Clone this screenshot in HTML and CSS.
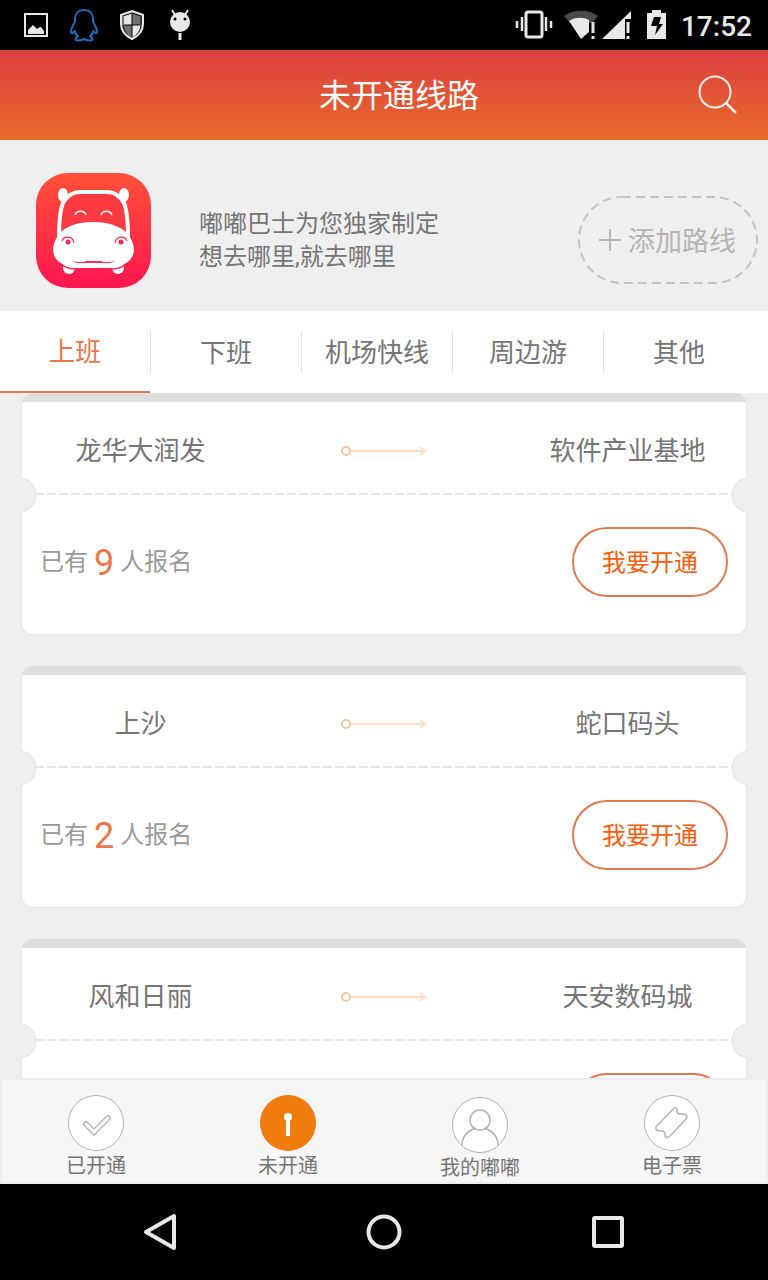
FILE: index.html
```
<!DOCTYPE html>
<html lang="zh-CN">
<head>
  <meta charset="UTF-8" />
  <meta name="viewport" content="width=device-width, initial-scale=1.0"/>
  <title>未开通线路</title>
  <link rel="stylesheet" href="styles.css">
</head>
<body>
  <div class="statusbar">
    <div class="notices">
      <svg width="28" height="36" viewBox="0 0 28 36"><rect x="3" y="7" width="22" height="22" fill="none" stroke="#e8e8e8" stroke-width="2"/><path d="M6 27v-4l5-5 4 4 3-2h1l3 4v3z" fill="#e8e8e8"/></svg>
      <svg width="28" height="36" viewBox="0 0 28 36" fill="none" stroke="#1b6cb8" stroke-width="2" stroke-linejoin="round"><path d="M14 3C8 3 5 7 5 12v3c-2 3-4 7-4 10 0 2 2 1 4-1 0 2 1 4 3 5-2 1-3 3-2 4 3 1 6 0 8-1 2 1 5 2 8 1 1-1 0-3-2-4 2-1 3-3 3-5 2 2 4 3 4 1 0-3-2-7-4-10v-3c0-5-3-9-9-9z"/></svg>
      <svg width="28" height="36" viewBox="0 0 28 36"><path d="M14 5v13h10V9zM14 18v13c-5-3-9-7-10-13z" fill="#707070"/><path d="M14 5L4 9v9h10zM14 18v13c5-3 9-7 10-13z" fill="#e8e8e8"/><path d="M14 7v23M6 18h16" stroke="#000" stroke-width="1"/><path d="M14 6l9 3v8c0 7-4 11-9 14-5-3-9-7-9-14V9z" fill="none" stroke="#000" stroke-width="1"/><path d="M14 4l11 4v9c0 8-5 12-11 15C8 29 3 25 3 17V8z" fill="none" stroke="#e8e8e8" stroke-width="2"/></svg>
      <svg width="28" height="36" viewBox="0 0 28 36"><circle cx="14" cy="15" r="10" fill="#e8e8e8"/><path d="M9 8L6 3M19 8l3-5" stroke="#e8e8e8" stroke-width="2"/><circle cx="9" cy="12" r="1.5"/><circle cx="19" cy="12" r="1.5"/><path d="M14 26v7" stroke="#e8e8e8" stroke-width="3"/></svg>
    </div>
    <div class="system">
      <svg width="36" height="36" viewBox="0 0 36 36" fill="none" stroke="#e8e8e8"><rect x="12" y="5" width="16" height="25" rx="2" stroke-width="3"/><path d="M8 10v14M32 10v14M3 14v7M37 14v7" stroke-width="2.5"/></svg>
      <div class="signals">
        <svg width="34" height="36" viewBox="0 0 34 36"><path d="M0 9C9 2 25 2 34 9l-5 6v1H6z" fill="#4a4a4a"/><path d="M5 14c6-4 14-4 20-1v12l-8 7z" fill="#e8e8e8"/><path d="M29 15v11M29 29v3" stroke="#e8e8e8" stroke-width="3"/></svg>
        <svg width="31" height="36" viewBox="0 0 31 36"><path d="M0 32L29 4v8h-6v20z" fill="#e8e8e8"/><path d="M26 15v11M26 29v3" stroke="#e8e8e8" stroke-width="3"/></svg>
      </div>
      <svg width="20" height="36" viewBox="0 0 20 36"><path d="M5 3h9v3h5v26H0V6h5z" fill="#e8e8e8"/><path d="M7 10h7l-2 7h4L8 28l2-9H4z" fill="#000"/></svg>
      <span class="clock">17:52</span>
    </div>
  </div>

  <header class="header">
    <h1>未开通线路</h1>
    <button class="search" aria-label="搜索">
      <svg width="40" height="40" viewBox="0 0 40 40" fill="none" stroke="#fff" stroke-opacity=".9"><circle cx="17" cy="17" r="15.5" stroke-width="2"/><path d="M28 28l10 10" stroke-width="2.5"/></svg>
    </button>
  </header>

  <section class="intro">
    <svg class="logo" width="115" height="115" viewBox="0 0 115 115">
      <defs><linearGradient id="red" x1="0" y1="0" x2="0" y2="1"><stop offset="0" stop-color="#ff5138"/><stop offset="1" stop-color="#ff1650"/></linearGradient></defs>
      <rect width="115" height="115" rx="32" fill="url(#red)"/>
      <g fill="#fff">
        <ellipse cx="27" cy="22" rx="5" ry="7"/><ellipse cx="88" cy="22" rx="5" ry="7"/>
        <rect x="27" y="86" width="12" height="15" rx="6"/><rect x="76" y="86" width="12" height="15" rx="6"/>
      </g>
      <path d="M23 66c0-16 1-29 4-36 4-7 9-11 17-11h27c8 0 13 4 17 11 3 7 4 20 4 36" fill="#fb3a42" stroke="#fff" stroke-width="4"/>
      <path d="M57 49c18 0 32 6 37 15 7 12 5 24-10 29-3 2-5 2-8 2H39c-3 0-5 0-8-2-15-5-17-17-10-29 5-9 18-15 36-15z" fill="#fff"/>
      <path d="M25 91c5 4 9 5 14 5h37c5 0 9-1 14-5" fill="none" stroke="#ff1d4d" stroke-width="1.5"/>
      <g fill="none" stroke="#fff" stroke-width="1.5"><path d="M39 42c2-5 9-5 11 0M65 42c2-5 9-5 11 0"/></g>
      <path d="M36 88c5 1 10 2 14 0h15c4 2 9 1 14 0-5 3-9 2-14 2H50c-5 0-9 1-14-2z" fill="#ff2850"/>
      <g fill="none" stroke="#ff2850" stroke-width="1.2"><path d="M26 68c2-6 11-5 12 2M79 70c1-7 10-8 12-2"/></g>
      <circle cx="32" cy="69" r="2.5" fill="#ff2850"/><circle cx="85" cy="69" r="2.5" fill="#ff2850"/>
    </svg>
    <p class="slogan">嘟嘟巴士为您独家制定<br/>想去哪里,就去哪里</p>
    <button class="add-route">
      <svg class="dashes" width="180" height="88"><rect x="1" y="1" width="178" height="86" rx="43" fill="none" stroke="#c4c4c4" stroke-width="2" stroke-dasharray="9 5"/></svg>
      <svg width="24" height="24" viewBox="0 0 24 24" stroke="#b4b4b4" stroke-width="2"><path d="M12 1v22M1 12h22"/></svg>
      <span>添加路线</span>
    </button>
  </section>

  <nav class="tabs">
    <a href="#" class="active">上班</a>
    <a href="#">下班</a>
    <a href="#">机场快线</a>
    <a href="#">周边游</a>
    <a href="#">其他</a>
  </nav>

  <main class="list">
    <article class="ticket">
      <div class="route">
        <span>龙华大润发</span>
        <svg width="86" height="12" viewBox="0 0 86 12" fill="none" stroke="#fbdfc8" stroke-width="2"><path d="M9 6h74M79 2l5 4-5 4"/><circle cx="5" cy="6" r="4" stroke="#f4c8a4"/></svg>
        <span>软件产业基地</span>
      </div>
      <div class="tear"></div>
      <div class="signup">
        <p>已有 <b>9</b> 人报名</p>
        <button class="open">我要开通</button>
      </div>
    </article>
    <article class="ticket">
      <div class="route">
        <span>上沙</span>
        <svg width="86" height="12" viewBox="0 0 86 12" fill="none" stroke="#fbdfc8" stroke-width="2"><path d="M9 6h74M79 2l5 4-5 4"/><circle cx="5" cy="6" r="4" stroke="#f4c8a4"/></svg>
        <span>蛇口码头</span>
      </div>
      <div class="tear"></div>
      <div class="signup">
        <p>已有 <b>2</b> 人报名</p>
        <button class="open">我要开通</button>
      </div>
    </article>
    <article class="ticket">
      <div class="route">
        <span>风和日丽</span>
        <svg width="86" height="12" viewBox="0 0 86 12" fill="none" stroke="#fbdfc8" stroke-width="2"><path d="M9 6h74M79 2l5 4-5 4"/><circle cx="5" cy="6" r="4" stroke="#f4c8a4"/></svg>
        <span>天安数码城</span>
      </div>
      <div class="tear"></div>
      <div class="signup">
        <p>已有 <b>1</b> 人报名</p>
        <button class="open">我要开通</button>
      </div>
    </article>
  </main>

  <nav class="bottom">
    <a href="#">
      <svg width="56" height="56" viewBox="0 0 56 56" stroke="#b4b4b4" fill="#fff"><circle cx="28" cy="28" r="27.5"/><path d="M18 29l8 8 14-14" fill="none" stroke="#b8b8b8" stroke-width="6" stroke-linecap="round"/><path d="M18 29l8 8 14-14" fill="none" stroke="#fff" stroke-width="3" stroke-linecap="round"/></svg>
      <span>已开通</span>
    </a>
    <a href="#">
      <svg width="56" height="56" viewBox="0 0 56 56"><circle cx="28" cy="28" r="28" fill="#f07c0e"/><circle cx="28" cy="22" r="4" fill="#fff"/><path d="M28 22v19" stroke="#fff" stroke-width="4"/></svg>
      <span>未开通</span>
    </a>
    <a href="#" class="mine">
      <svg width="56" height="56" viewBox="0 0 56 56" stroke="#b0b0b0" fill="#fff"><circle cx="28" cy="28" r="27.5"/><path d="M10 48c0-9 7-17 18-17s18 8 18 17" fill="none" stroke-width="1.5"/><circle cx="28" cy="23" r="10" stroke-width="1.5"/></svg>
      <span>我的嘟嘟</span>
    </a>
    <a href="#">
      <svg width="56" height="56" viewBox="0 0 56 56" stroke="#b4b4b4" fill="#fff"><circle cx="28" cy="28" r="27.5"/><path d="M30 13q2-1 3 1c-1 4 2 6 6 5q3 0 4 2 0 2-1 3L26 41q-3 3-5 0c1-4-2-6-6-5q-4-1-3-4z" stroke-width="1.5"/></svg>
      <span>电子票</span>
    </a>
  </nav>

  <div class="softkeys">
    <button aria-label="返回"><svg width="40" height="40" viewBox="0 0 40 40" fill="none" stroke="#e8e8e8" stroke-width="4" stroke-linejoin="round"><path d="M34 4v32L6 20z"/></svg></button>
    <button aria-label="主页"><svg width="40" height="40" viewBox="0 0 40 40" fill="none" stroke="#e8e8e8" stroke-width="4"><circle cx="20" cy="20" r="15.5"/></svg></button>
    <button aria-label="最近任务"><svg width="40" height="40" viewBox="0 0 40 40" fill="none" stroke="#e8e8e8" stroke-width="4"><rect x="6" y="6" width="28" height="28" rx="1"/></svg></button>
  </div>
</body>
</html>
```
FILE: styles.css
```
* { box-sizing: border-box; }
body { margin: 0; height: 100vh; display: flex; flex-direction: column; background: #efefef; color: #757575; font-family: Roboto, "Noto Sans CJK SC", sans-serif; }
h1, p { margin: 0; font-weight: normal; }
a { color: inherit; text-decoration: none; }
button { padding: 0; border: 0; background: none; font-family: inherit; }
svg { display: block; flex: none; }

/* system bar */
.statusbar { flex: none; height: 50px; padding: 0 16px 0 22px; display: flex; justify-content: space-between; align-items: center; background: #000; }
.notices { display: flex; gap: 20px; }
.system { display: flex; align-items: center; gap: 14px; }
.system svg { overflow: visible; }
.signals { display: flex; gap: 4px; }
.clock { padding-top: 4px; color: #e8e8e8; font-size: 28px; font-weight: 500; line-height: 32px; }

.header { flex: none; height: 90px; padding: 0 30px 0 60px; display: grid; grid-template-columns: 1fr auto 1fr; align-items: center; background: linear-gradient(#db4040, #e86a2a); }
.header h1 { grid-column: 2; padding-top: 2px; color: #fff; font-size: 32px; line-height: 48px; }
.search { justify-self: end; }

.intro { flex: none; padding: 33px 10px 23px 36px; display: flex; align-items: flex-end; background: #efefef; }
.slogan { flex: 1; margin: 0 0 14px 48px; font-size: 24px; line-height: 33px; }
.add-route { position: relative; width: 180px; height: 88px; margin-bottom: 4px; padding-right: 2px; display: flex; justify-content: center; align-items: center; gap: 6px; color: #b4b4b4; font-size: 27px; }
.add-route span { padding-bottom: 2px; }
.dashes { position: absolute; top: 0; left: 0; }

.tabs { flex: none; height: 82px; padding-right: 14px; display: flex; align-items: center; background: #fff; font-size: 26px; text-align: center; }
.tabs a { flex: 1; padding-top: 2px; line-height: 40px; border-left: 1px solid #e0e0e0; }
.tabs .active { line-height: 78px; border-left: 0; border-bottom: 2px solid #e07a52; color: #e87848; }

.list { flex: 1; min-height: 0; overflow: hidden; padding: 0 21px; }
.ticket { margin-bottom: 31px; padding-top: 8px; border: 1px solid #e4e4e4; border-top-color: #dedede; border-radius: 12px; background: linear-gradient(#dedede 8px, #fff 8px); }
.route { height: 91px; display: grid; grid-template-columns: 1fr 250px 1fr; justify-items: center; align-items: center; padding-top: 6px; font-size: 26px; line-height: 38px; }

/* perforated line with a half circle cut out of each side */
.tear { position: relative; height: 2px; margin: 0 13px; background: repeating-linear-gradient(90deg, #e6e6e6 0 9px, transparent 9px 12px); }
.tear::before, .tear::after { content: ""; position: absolute; top: -15px; width: 14px; height: 32px; border: 1px solid #e4e4e4; background: #efefef; }
.tear::before { left: -14px; border-left: 0; border-radius: 0 16px 16px 0; }
.tear::after { right: -14px; border-right: 0; border-radius: 16px 0 0 16px; }

.signup { display: flex; justify-content: space-between; align-items: center; padding: 32px 18px 37px; }
.signup p { display: flex; align-items: center; gap: 6px; color: #999; font-size: 24px; line-height: 36px; }
.signup b { padding-top: 2px; color: #e87848; font-size: 36px; font-weight: normal; }
.open { width: 156px; height: 70px; padding-bottom: 3px; border: 2px solid #e07a52; border-radius: 35px; color: #f95e10; font-size: 24px; }

.bottom { flex: none; height: 106px; display: flex; box-shadow: inset 0 0 0 2px #eee; background: #f6f6f6; font-size: 20px; }
.bottom a { flex: 1; padding-top: 17px; display: flex; flex-direction: column; align-items: center; line-height: 30px; }
.bottom .mine { padding-top: 19px; }

.softkeys { flex: none; height: 96px; padding: 0 48px; display: flex; background: #000; }
.softkeys button { flex: 1; display: flex; justify-content: center; align-items: center; }
```
